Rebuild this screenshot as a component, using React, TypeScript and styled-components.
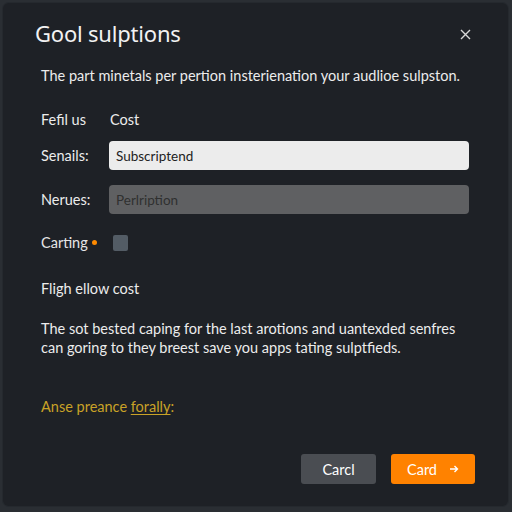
import styled, { createGlobalStyle } from "styled-components";

const GlobalStyle = createGlobalStyle`
  html, body {
    margin: 0;
    padding: 0;
    background: #2a2e33;
    font-family: "Noto Sans", "Open Sans", sans-serif;
  }
`;

const Page = styled.div`
  width: 512px;
  height: 512px;
  padding: 3px 4px 6px 3px;
  box-sizing: border-box;
  display: flex;
`;

const Dialog = styled.section`
  flex: 1;
  background: #1e2126;
  border-radius: 6px;
  box-shadow: 0 0 0 1px #25292e;
  padding: 16px 32px 0 32px;
  display: flex;
  flex-direction: column;
  box-sizing: border-box;
`;

const Header = styled.header`
  display: flex;
  justify-content: space-between;
  align-items: center;
  height: 28px;
`;

const Title = styled.h1`
  margin: 0;
  font-size: 22px;
  font-weight: 400;
  color: #f2f2f2;
  letter-spacing: -0.2px;
`;

const CloseButton = styled.button`
  background: none;
  border: none;
  padding: 0;
  width: 14px;
  height: 14px;
  margin: 2px 4px 0 0;
  display: flex;
  align-items: center;
  justify-content: center;
  cursor: pointer;
`;

const Body = styled.div`
  padding: 0 7px 0 6px;
  display: flex;
  flex-direction: column;
  color: #e6e6e6;
  font-family: Lato, "Noto Sans", sans-serif;
  font-size: 14.5px;
`;

const Text = styled.p<{ $top: number }>`
  margin: ${(p) => p.$top}px 0 0 0;
  line-height: 19px;
  color: #ececec;
  white-space: nowrap;
`;

const HeadRow = styled.div`
  display: flex;
  margin-top: 25px;
  line-height: 19px;
  color: #ececec;
`;

const ColLabel = styled.span`
  width: 69px;
`;

const FieldRow = styled.div<{ $top: number }>`
  display: flex;
  align-items: center;
  margin-top: ${(p) => p.$top}px;
`;

const FieldLabel = styled.label`
  width: 68px;
  color: #ececec;
`;

const Input = styled.div<{ $muted?: boolean }>`
  flex: 1;
  height: 29px;
  border-radius: 4px;
  background: ${(p) => (p.$muted ? "#5f6062" : "#ececec")};
  color: ${(p) => (p.$muted ? "#2f3030" : "#222")};
  font-size: 13.5px;
  display: flex;
  align-items: center;
  padding-left: 7px;
  box-sizing: border-box;
`;

const Dot = styled.span`
  width: 5px;
  height: 5px;
  border-radius: 50%;
  background: #ff8a00;
  margin-left: 4px;
`;

const Checkbox = styled.span`
  width: 15px;
  height: 16px;
  border-radius: 2px;
  background: #535c65;
  margin-left: 16px;
`;

const Note = styled.p`
  margin: 40px 0 0 0;
  color: #c9a227;
  line-height: 19px;
  u {
    text-underline-offset: 2px;
  }
`;

const Footer = styled.footer`
  display: flex;
  justify-content: flex-end;
  gap: 15px;
  margin-top: auto;
  margin-bottom: 22px;
  padding-right: 1px;
`;

const Button = styled.button<{ $primary?: boolean }>`
  height: 30px;
  border: none;
  border-radius: 3px;
  font-family: Lato, "Noto Sans", sans-serif;
  font-size: 14.5px;
  color: #fff;
  background: ${(p) => (p.$primary ? "#ff8200" : "#4a4d52")};
  width: ${(p) => (p.$primary ? "84px" : "75px")};
  display: flex;
  align-items: center;
  justify-content: center;
  gap: 12px;
`;

export default function App() {
  return (
    <>
      <GlobalStyle />
      <Page>
        <Dialog>
          <Header>
            <Title>Gool sulptions</Title>
            <CloseButton aria-label="Close">
              <svg width="11" height="11" viewBox="0 0 11 11">
                <path d="M1 1L10 10M10 1L1 10" stroke="#d8d8d8" strokeWidth="1.4" />
              </svg>
            </CloseButton>
          </Header>
          <Body>
            <Text $top={19}>
              The part minetals per pertion insterienation your audlioe sulpston.
            </Text>
            <HeadRow>
              <ColLabel>Fefil us</ColLabel>
              <span>Cost</span>
            </HeadRow>
            <FieldRow $top={12}>
              <FieldLabel>Senails:</FieldLabel>
              <Input>Subscriptend</Input>
            </FieldRow>
            <FieldRow $top={15}>
              <FieldLabel>Nerues:</FieldLabel>
              <Input $muted>Perlription</Input>
            </FieldRow>
            <FieldRow $top={20}>
              <span>Carting</span>
              <Dot />
              <Checkbox />
            </FieldRow>
            <Text $top={28}>Fligh ellow cost</Text>
            <Text $top={21}>
              The sot bested caping for the last arotions and uantexded senfres
              <br />
              can goring to they breest save you apps tating sulptfieds.
            </Text>
            <Note>
              Anse preance <u>forally</u>:
            </Note>
          </Body>
          <Footer>
            <Button>Carcl</Button>
            <Button $primary>
              Card
              <svg width="10" height="10" viewBox="0 0 10 10">
                <path d="M1 5H8.5M5.5 2L8.5 5L5.5 8" stroke="#fff" strokeWidth="1.4" fill="none" />
              </svg>
            </Button>
          </Footer>
        </Dialog>
      </Page>
    </>
  );
}
